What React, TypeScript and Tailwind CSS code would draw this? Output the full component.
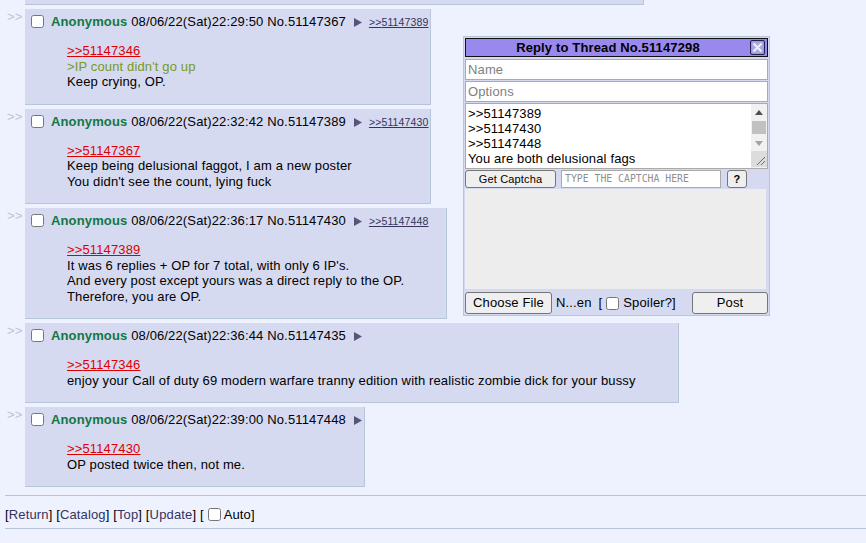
import React from "react";

type Post = {
  no: string;
  date: string;
  backlink?: string;
  quote: string;
  lines: { text: string; green?: boolean }[];
};

const posts: Post[] = [
  {
    no: "51147367",
    date: "08/06/22(Sat)22:29:50",
    backlink: "51147389",
    quote: "51147346",
    lines: [{ text: ">IP count didn't go up", green: true }, { text: "Keep crying, OP." }],
  },
  {
    no: "51147389",
    date: "08/06/22(Sat)22:32:42",
    backlink: "51147430",
    quote: "51147367",
    lines: [
      { text: "Keep being delusional faggot, I am a new poster" },
      { text: "You didn't see the count, lying fuck" },
    ],
  },
  {
    no: "51147430",
    date: "08/06/22(Sat)22:36:17",
    backlink: "51147448",
    quote: "51147389",
    lines: [
      { text: "It was 6 replies + OP for 7 total, with only 6 IP's." },
      { text: "And every post except yours was a direct reply to the OP." },
      { text: "Therefore, you are OP." },
    ],
  },
  {
    no: "51147435",
    date: "08/06/22(Sat)22:36:44",
    quote: "51147346",
    lines: [
      {
        text: "enjoy your Call of duty 69 modern warfare tranny edition with realistic zombie dick for your bussy",
      },
    ],
  },
  {
    no: "51147448",
    date: "08/06/22(Sat)22:39:00",
    quote: "51147430",
    lines: [{ text: "OP posted twice then, not me." }],
  },
];

function MenuArrow() {
  return (
    <svg width="8" height="9" viewBox="0 0 8 9" className="inline-block ml-[8px] align-[-1px]">
      <polygon points="0,0 8,4.5 0,9" fill="#55557A" />
    </svg>
  );
}

function PostRow({ p }: { p: Post }) {
  return (
    <div className="flex items-start">
      <div className="ml-[2px] mr-[2px] w-[16px] leading-[15px] text-[#B7C5D9] whitespace-nowrap">&gt;&gt;</div>
      <div className="bg-[#D6DAF0] border-r border-b border-[#B7C5D9] p-[2px]">
        <div className="flex items-start h-[19px] whitespace-nowrap">
          <input type="checkbox" className="mt-[4px] ml-[4px] mr-[3px] w-[13px] h-[13px] shrink-0" />
          <span className="mt-[3px] ml-[4px] leading-[15px]">
            <span className="font-bold text-[#117743]">Anonymous</span> {p.date} No.{p.no}
            <MenuArrow />
            {p.backlink && (
              <span className="ml-[7px] text-[10.5px] text-[#34345C] underline">&gt;&gt;{p.backlink}</span>
            )}
          </span>
        </div>
        <div className="mx-[40px] mt-[13px] mb-[12px] leading-[15.5px] whitespace-nowrap">
          <div>
            <span className="text-[#DD0000] underline">&gt;&gt;{p.quote}</span>
          </div>
          {p.lines.map((l, i) => (
            <div key={i} className={l.green ? "text-[#789922]" : ""}>
              {l.text}
            </div>
          ))}
        </div>
      </div>
    </div>
  );
}

function CloseIcon() {
  return (
    <svg width="15" height="15" viewBox="0 0 15 15" className="block">
      <rect x="0.5" y="0.5" width="14" height="14" rx="1.5" fill="#9A9ADC" stroke="#22224A" />
      <rect x="2" y="2" width="11" height="11" fill="#A8A8E4" />
      <path d="M3.5 3.5 L11.5 11.5 M11.5 3.5 L3.5 11.5" stroke="#F0F0FF" strokeWidth="2" />
    </svg>
  );
}

function QuickReply() {
  return (
    <div className="absolute left-[463px] top-[36px] w-[307px] bg-[#D6DAF0] border border-[#B7C5D9] p-[1px] flex flex-col">
      <div className="h-[19px] border border-[#111] bg-[#9988EE] flex items-center">
        <div className="flex-1 text-center font-bold leading-[15px] text-black">Reply to Thread No.51147298</div>
        <div className="mr-[2px]">
          <CloseIcon />
        </div>
      </div>
      <div className="mt-[2px] h-[21px] bg-white border border-[#AAAAAA] flex items-center pl-[2px] text-[#808080] leading-[15px]">
        Name
      </div>
      <div className="mt-[1px] h-[21px] bg-white border border-[#AAAAAA] flex items-center pl-[2px] text-[#808080] leading-[15px]">
        Options
      </div>
      <div className="mt-[1px] h-[66px] bg-white border border-[#AAAAAA] flex">
        <div className="flex-1 pl-[2px] pt-[2px] leading-[15px] text-black whitespace-nowrap overflow-hidden">
          <div>&gt;&gt;51147389</div>
          <div>&gt;&gt;51147430</div>
          <div>&gt;&gt;51147448</div>
          <div>You are both delusional fags</div>
        </div>
        <div className="w-[16px] bg-[#F1F1F1] flex flex-col">
          <div className="h-[16px] flex items-center justify-center">
            <svg width="8" height="5" viewBox="0 0 8 5">
              <polygon points="4,0 8,5 0,5" fill="#505050" />
            </svg>
          </div>
          <div className="mt-[1px] h-[13px] mx-[1px] bg-[#C1C1C1]" />
          <div className="mt-[1px] h-[16px] flex items-center justify-center">
            <svg width="8" height="5" viewBox="0 0 8 5">
              <polygon points="0,0 8,0 4,5" fill="#A3A3A3" />
            </svg>
          </div>
          <div className="h-[16px] bg-[#DCDCDC] relative">
            <svg width="16" height="16" viewBox="0 0 16 16" className="absolute left-0 top-0">
              <path d="M6 14 L14 6 M10 14 L14 10" stroke="#6E6E6E" strokeWidth="1" />
            </svg>
          </div>
        </div>
      </div>
      <div className="mt-[1px] h-[18px] flex items-center">
        <div className="w-[91px] h-[18px] bg-[#EFEFEF] border border-[#767676] rounded-[3px] flex items-center justify-center text-[11px] text-black">
          Get Captcha
        </div>
        <div className="ml-[5px] w-[160px] h-[18px] bg-white border border-[#A9A9A9] flex items-center pl-[3px] font-['DejaVu_Sans_Mono',monospace] text-[9.8px] tracking-normal text-[#909090] whitespace-pre">
          TYPE THE CAPTCHA HERE
        </div>
        <div className="ml-[6px] w-[20px] h-[18px] bg-[#EFEFEF] border border-[#767676] rounded-[3px] flex items-center justify-center text-[11px] font-bold text-black">
          ?
        </div>
      </div>
      <div className="mt-[1px] w-[301px] h-[100px] bg-[#EDEDED]" />
      <div className="mt-[3px] h-[22px] flex items-center">
        <div className="w-[87px] h-[22px] bg-[#EFEFEF] border border-[#767676] rounded-[3px] flex items-center justify-center text-black">
          Choose File
        </div>
        <span className="ml-[4px] text-black whitespace-nowrap">N...en</span>
        <span className="ml-[7px] text-black">[</span>
        <input type="checkbox" className="ml-[4px] w-[13px] h-[13px]" />
        <span className="ml-[4px] text-black whitespace-nowrap">Spoiler?]</span>
        <div className="ml-auto w-[76px] h-[22px] bg-[#EFEFEF] border border-[#767676] rounded-[3px] flex items-center justify-center text-black">
          Post
        </div>
      </div>
    </div>
  );
}

export default function App() {
  return (
    <div className="relative w-[866px] h-[543px] overflow-hidden bg-[#EEF2FF] font-['Liberation_Sans',Arial,sans-serif] text-[13px] tracking-[0.14px] text-black pl-[5px]">
      <div className="flex flex-col gap-[4px]">
        <div className="flex items-start">
          <div className="ml-[2px] mr-[2px] w-[16px]" />
          <div className="w-[619px] h-[5px] bg-[#D6DAF0] border-r border-b border-[#B7C5D9]" />
        </div>
        {posts.map((p) => (
          <PostRow key={p.no} p={p} />
        ))}
      </div>
      <div className="mt-[8px] border-t border-[#B7C5D9]" />
      <div className="mt-[11px] h-[15px] leading-[15px] flex items-center whitespace-nowrap">
        <span>
          [<span className="text-[#34345C]">Return</span>] [<span className="text-[#34345C]">Catalog</span>] [
          <span className="text-[#34345C]">Top</span>] [<span className="text-[#34345C]">Update</span>] [
        </span>
        <input type="checkbox" className="ml-[4px] mr-[3px] w-[13px] h-[13px]" />
        <span>Auto]</span>
      </div>
      <div className="mt-[6px] border-t border-[#B7C5D9]" />
      <QuickReply />
    </div>
  );
}
